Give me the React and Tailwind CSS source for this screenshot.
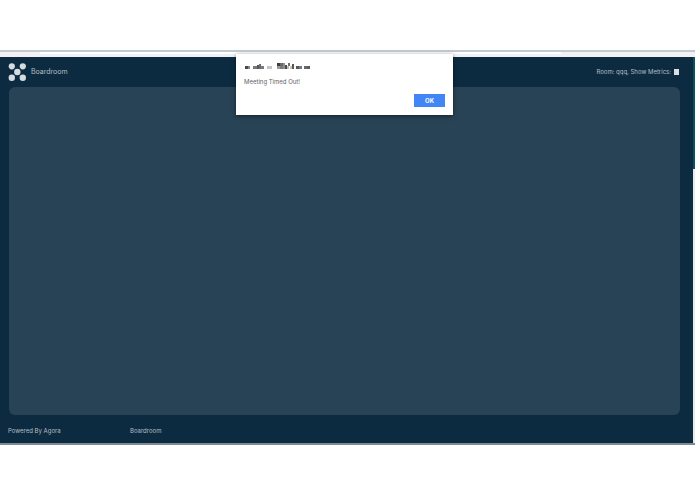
const Logo = () => {
    return (
        <svg className="h-5 w-5 shrink-0" viewBox="0 0 20 20" fill="#d5dce0" aria-hidden="true">
            <circle cx="3.8" cy="4.3" r="3.1" />
            <circle cx="14.8" cy="4.3" r="3.1" />
            <circle cx="9.3" cy="10" r="3.2" />
            <circle cx="3.8" cy="15.8" r="3.2" />
            <circle cx="14.8" cy="15.8" r="3.2" />
        </svg>
    )
}

// x, y, width, height, color
const blocks = [
    [0, 3, 3, 3, '#46484c'], [3, 3, 2, 3, '#85878b'],
    [8, 3, 4, 3, '#77797d'], [12, 2, 2, 4, '#55575b'], [14, 1, 2, 5, '#6b6d71'], [16, 3, 3, 3, '#77797d'],
    [22, 3, 5, 3, '#c4c5c8'],
    [32, 0, 3, 3, '#3c3e42'], [35, 0, 3, 3, '#66686b'], [32, 3, 3, 3, '#a09a96'], [35, 3, 3, 3, '#77797d'],
    [38, 0, 2, 6, '#8c8e94'], [40, 2, 2, 4, '#4a4c51'], [42, 3, 2, 3, '#c1bdb9'], [43, 0, 2, 3, '#6e7076'],
    [45, 3, 2, 3, '#d9bf9c'], [47, 1, 2, 5, '#55575c'],
    [51, 3, 3, 3, '#55575b'], [54, 3, 3, 3, '#77797d'],
    [59, 3, 3, 3, '#66686c'], [62, 3, 3, 3, '#5a5c60'],
]

const HiddenOrigin = () => {
    return (
        <svg className="h-[6px] w-[66px]" viewBox="0 0 66 6" shapeRendering="crispEdges" aria-hidden="true">
            {blocks.map(([x, y, width, height, fill], i) => (
                <rect key={i} x={x} y={y} width={width} height={height} fill={fill} />
            ))}
        </svg>
    )
}

const TimeoutDialog = () => {
    return (
        <div
            role="alertdialog"
            aria-describedby="timeout-message"
            className="absolute top-1 left-[236px] w-[217px] bg-white px-2 pt-[9px] pb-2 shadow-[0_1px_4px_rgba(0,0,0,0.5)]"
        >
            <div className="flex px-px">
                <HiddenOrigin />
            </div>
            <p id="timeout-message" className="mt-2 text-[6px] leading-[10px] text-[#5f5f5f]">Meeting Timed Out!</p>
            <div className="mt-[7px] flex justify-end">
                <button className="h-[13px] w-[31px] bg-[#4285f4] text-[6px] leading-[13px] font-bold text-white">OK</button>
            </div>
        </div>
    )
}

const Header = () => {
    return (
        <header className="flex h-[30px] items-center justify-between pr-[14px] pl-2">
            <div className="flex items-center gap-[3px]">
                <Logo />
                <h1 className="text-[7px] leading-[10px] text-[#b4bfc6]">Boardroom</h1>
            </div>
            <label className="flex items-center gap-[3px] text-[6px] leading-[10px] text-[#b4bfc6]">
                Room: qqq, Show Metrics:
                <input type="checkbox" className="h-[6px] w-[5px] appearance-none bg-[#dbdfe1]" />
            </label>
        </header>
    )
}

const Footer = () => {
    return (
        <footer className="flex h-7 items-center px-2 pt-1 text-[6px] leading-[10px] text-[#b4bfc6]">
            <span className="w-[122px]">Powered By Agora</span>
            <span>Boardroom</span>
        </footer>
    )
}

const App = () => {
    return (
        <div className="flex min-h-screen flex-col bg-white pt-[50px] pb-[49px] font-['Inter',sans-serif]">
            <div className="relative flex grow flex-col">
                <div className="flex h-[7px] shrink-0 flex-col border-t-2 border-[#c3c9d3] bg-[#f1f1f4]">
                    <div className="ml-10 h-[2px] w-3/4 bg-white" />
                </div>
                <div className="flex grow border-b-2 border-[#7e8b94]">
                    <div className="flex grow flex-col bg-[#0c2b40]">
                        <Header />
                        <main className="mr-[13px] ml-[9px] grow rounded-md bg-[#284355]" />
                        <Footer />
                    </div>
                    <div className="flex w-[2px] flex-col bg-[#e8ebee]">
                        <div className="h-28 bg-[#07505c]" />
                    </div>
                </div>
                <TimeoutDialog />
            </div>
        </div>
    )
}

export default App
